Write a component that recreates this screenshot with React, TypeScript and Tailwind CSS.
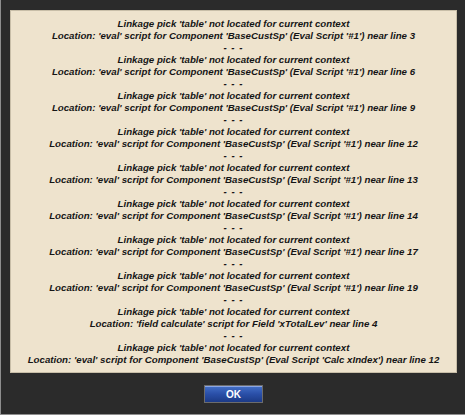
const first = "Linkage pick 'table' not located for current context";

const entries: string[] = [
  "Location: 'eval' script for Component 'BaseCustSp' (Eval Script '#1') near line 3",
  "Location: 'eval' script for Component 'BaseCustSp' (Eval Script '#1') near line 6",
  "Location: 'eval' script for Component 'BaseCustSp' (Eval Script '#1') near line 9",
  "Location: 'eval' script for Component 'BaseCustSp' (Eval Script '#1') near line 12",
  "Location: 'eval' script for Component 'BaseCustSp' (Eval Script '#1') near line 13",
  "Location: 'eval' script for Component 'BaseCustSp' (Eval Script '#1') near line 14",
  "Location: 'eval' script for Component 'BaseCustSp' (Eval Script '#1') near line 17",
  "Location: 'eval' script for Component 'BaseCustSp' (Eval Script '#1') near line 19",
  "Location: 'field calculate' script for Field 'xTotalLev' near line 4",
  "Location: 'eval' script for Component 'BaseCustSp' (Eval Script 'Calc xIndex') near line 12",
];

export default function App() {
  return (
    <div className="w-[465px] h-[415px] bg-[#2b2b2b] border-l border-b border-[#8e8e8e] flex flex-col items-start pl-[9px] pt-[10px] font-['Liberation_Sans',Arial,sans-serif]">
      <div className="w-[447px] h-[363px] bg-[#eee3cd] border border-[#c8bea8] flex flex-col items-center pt-[7px] text-[#151515] text-[9.7px] leading-[12px] font-bold italic">
        {entries.map((loc, i) => (
          <div key={i} className="flex flex-col items-center">
            {i > 0 && <div className="tracking-[1px]">- - -</div>}
            <div>{first}</div>
            <div>{loc}</div>
          </div>
        ))}
      </div>
      <div className="w-[447px] flex justify-center pt-[12px]">
        <button className="w-[59px] h-[18px] border border-[#6c6c6c] bg-gradient-to-b from-[#4470c8] via-[#2a4fa8] to-[#1c3a86] text-white text-[10px] font-bold shadow-[inset_0_1px_0_#8aa6e4] font-['Liberation_Sans',Arial,sans-serif]">
          OK
        </button>
      </div>
    </div>
  );
}
